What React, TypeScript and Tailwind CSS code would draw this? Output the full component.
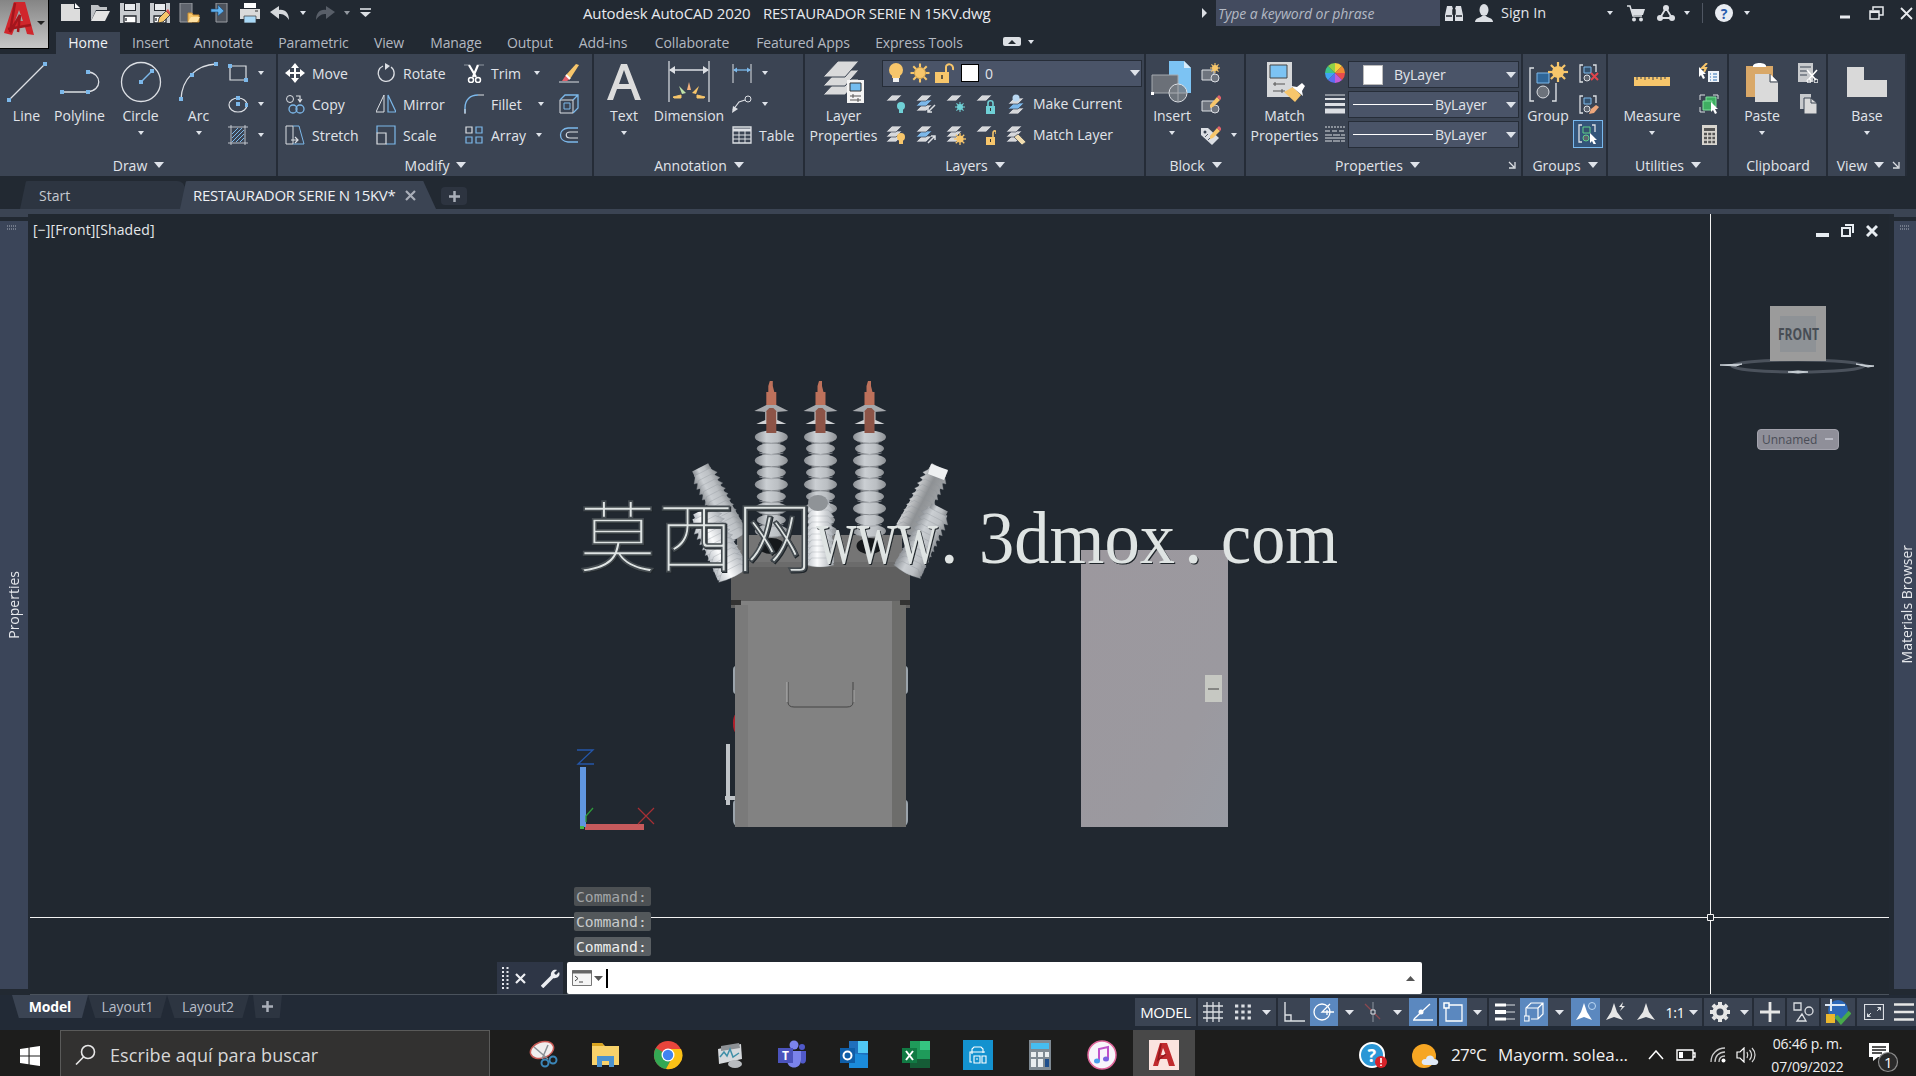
import type { ReactNode } from 'react'
import clsx from 'clsx'

type IconProps = { w?: number; h?: number; vb?: string; className?: string; children: ReactNode }

// Base wrapper, small ribbon icons are drawn on a 20x20 grid
function I({ w = 20, h = 20, vb, className, children }: IconProps) {
  return (
    <svg width={w} height={h} viewBox={vb ?? `0 0 ${w} ${h}`} fill="none" className={clsx('shrink-0', className)}>
      {children}
    </svg>
  )
}

const W = '#dcdfe4'
const B = '#7cb8ea'
const Y = '#f7c66b'

function Caret({ className, big }: { className?: string; big?: boolean }) {
  return (
    <svg width={big ? 10 : 6} height={big ? 6 : 4} viewBox="0 0 10 6" preserveAspectRatio="none" className={clsx('shrink-0', className)}>
      <path d="M0 0H10L5 6Z" fill="#dfe3ea" />
    </svg>
  )
}

function Cell({ className, children }: { className: string; children?: ReactNode }) {
  return <div className={clsx('flex h-full shrink-0 items-center justify-center', className)}>{children}</div>
}

/* ---------- title bar ---------- */

const Floppy = () => (
  <>
    <path d="M0 0H20V20H0Z" fill="#c9ccd0" />
    <path d="M4 0H16V8H4Z" fill="#23272e" />
    <path d="M5 1H15V7H5Z" fill="#e9ebee" />
    <path d="M4 13H16V20H4Z" fill="#fff" />
    <path d="M4 13H16V20H4ZM6 15v3" stroke="#23272e" strokeWidth="1.3" />
  </>
)

function TitleBar() {
  return (
    <div className="flex h-8 items-start">
      <div className="flex h-[26px] pl-[6px]">
        <Cell className="w-[30px]"><I><path d="M1 1H14V6H20V18H1Z" fill="#dcdcdc" /><path d="M15 0L20 5H15Z" fill="#fff" /></I></Cell>
        <Cell className="w-[30px]"><I><path d="M1 18V2H8L10 4H17V7H6Z" fill="#bfc2c6" /><path d="M6 8H20L15 18H1Z" fill="#e4e4e4" /></I></Cell>
        <Cell className="w-[30px]"><I><Floppy /></I></Cell>
        <Cell className="w-[30px]"><I><Floppy /><path d="M8 20L9 15L16 8L20 12L13 19Z" fill={Y} stroke="#23272e" strokeWidth=".8" /><path d="M16 8L18 6L20 9V12Z" fill="#e05252" /></I></Cell>
        <Cell className="w-[30px]"><I w={22}><path d="M1 0H13V19H1Z" fill="#5f646d" stroke="#9a9da3" /><path d="M9 19V10H13L14 12H20V19Z" fill={Y} stroke="#c98d32" /><path d="M12 14H21L18 19H9Z" fill="#ffe2a3" /></I></Cell>
        <Cell className="w-[30px]"><I><path d="M6 0H17V19H6Z" fill="#4d525b" stroke="#9a9da3" /><path d="M1 6H8V2L14 8L8 13V9H1Z" fill="#5fb0ee" stroke="#1e4d78" strokeWidth=".6" /></I></Cell>
        <Cell className="w-[30px]"><I><path d="M4 0H16V5H4Z" fill="#fff" /><path d="M0 6H20V16H0Z" fill="#dadada" /><path d="M4 13H16V20H4Z" fill="#a9d8f6" stroke="#333" strokeWidth=".7" /><path d="M15 8h3" stroke="#333" /></I></Cell>
        <Cell className="w-[30px]"><I><path d="M0 9L9 3V7C15 6 19 10 19 17C16 12 13 11 9 11V16Z" fill="#d5d8dc" /></I></Cell>
        <Cell className="w-[15px]"><Caret /></Cell>
        <Cell className="w-[30px]"><I><path d="M20 9L11 3V7C5 6 1 10 1 17C4 12 7 11 11 11V16Z" fill="#585e68" /></I></Cell>
        <Cell className="w-[14px]"><Caret className="opacity-60" /></Cell>
        <Cell className="w-[22px]"><I w={11} h={10}><path d="M0 1H11" stroke={W} strokeWidth="1.6" /><path d="M0 4H11L5.500 9Z" fill={W} /></I></Cell>
      </div>
      <div className="flex h-[26px] items-center pl-[207px] text-[15px] text-[#e8eaee]">
        <span className="w-[180px] tracking-[-0.15px]">Autodesk AutoCAD 2020</span>
        <span className="w-[430px] tracking-[-0.26px]">RESTAURADOR SERIE N 15KV.dwg</span>
      </div>
      <div className="flex h-[26px] items-center">
        <Cell className="w-[23px]"><I w={5} h={10}><path d="M0 0L5 5L0 10Z" fill={W} /></I></Cell>
        <div className="flex h-[26px] w-[224px] items-center bg-[#434b5f] pl-[2px] text-[14px] tracking-[-0.1px] text-[#b4b9c4] italic">
          Type a keyword or phrase
        </div>
        <Cell className="w-[28px]"><I w={18} h={18}><path d="M2 2H7L8 5V17H0V11ZM11 2H16L18 11V17H10V5Z" fill={W} /><path d="M8 6H10V10H8ZM1 12H7M11 12H17" stroke="#23292f" strokeWidth="1.500" /></I></Cell>
        <Cell className="w-[32px]"><I w={18} h={18}><ellipse cx="9" cy="6" rx="4.500" ry="6" fill={W} /><path d="M0 18C0 14 5 14 7 12H11C13 14 18 14 18 18Z" fill={W} /></I></Cell>
        <span className="w-[99px] pl-px text-[14.5px] text-[#e1e4e9]">Sign In</span>
        <Cell className="w-[22px]"><Caret /></Cell>
        <Cell className="w-[30px]"><I w={18} h={17}><path d="M0 1H3L6 11H15" stroke={W} strokeWidth="1.500" /><path d="M4 4H18L16 10H6Z" fill={W} /><circle cx="7" cy="14.500" r="2" fill={W} /><circle cx="14" cy="14.500" r="2" fill={W} /></I></Cell>
        <Cell className="w-[30px]"><I w={18} h={16}><path d="M9 3L3 13H15Z" stroke={W} strokeWidth="1.800" /><circle cx="9" cy="3" r="3" fill={W} /><circle cx="3" cy="13" r="3" fill={W} /><circle cx="15" cy="13" r="3" fill={W} /></I></Cell>
        <Cell className="w-[12px]"><Caret /></Cell>
        <Cell className="w-[18px]"><div className="h-[20px] w-px bg-[#4f5662]" /></Cell>
        <Cell className="w-[26px]"><div className="flex size-[18px] items-center justify-center rounded-full bg-[#e9ecf2] text-[14px] font-bold text-[#2b5cad]">?</div></Cell>
        <Cell className="w-[20px]"><Caret /></Cell>
        <Cell className="ml-[68px] w-[40px]"><I w={10} h={12}><path d="M0 10H10" stroke="#e8eaee" strokeWidth="3" /></I></Cell>
        <Cell className="w-[22px]"><I w={15} h={14}><path d="M4 4V1H14V9H10" stroke="#e8eaee" strokeWidth="1.500" /><path d="M1 5H10V13H1Z" stroke="#e8eaee" strokeWidth="1.500" /><path d="M1 6H10" stroke="#e8eaee" strokeWidth="2" /></I></Cell>
        <Cell className="w-[29px] pl-2.5"><I w={13} h={13}><path d="M1 1L12 12M12 1L1 12" stroke="#e8eaee" strokeWidth="1.800" /></I></Cell>
      </div>
    </div>
  )
}

const ribbonTabs = [
  ['Insert', 'w-[61px]'],
  ['Annotate', 'w-[85px]'],
  ['Parametric', 'w-[95px]'],
  ['View', 'w-[56px]'],
  ['Manage', 'w-[78px]'],
  ['Output', 'w-[70px]'],
  ['Add-ins', 'w-[76px]'],
  ['Collaborate', 'w-[102px]'],
  ['Featured Apps', 'w-[120px]'],
  ['Express Tools', 'w-[112px]'],
]

function Header() {
  return (
    <header className="flex h-[54px]">
      <div className="flex h-[49px] w-[49px] items-center border-r border-b border-black bg-gradient-to-b from-[#858585] to-[#c6c6c6]">
        <I w={48} h={48}>
          <path d="M14 2H25L34 35L27 34L25 27H15L12 35L4 33Z" fill="#d0262c" />
          <path d="M19 10L23 21H15Z" fill="#a3a3a3" />
          <path d="M15 3L10 32L20 15L18 32M8 29L31 25" stroke="#a3161d" strokeWidth="2.500" />
          <path d="M37 21H45L41 25Z" fill="#222" />
        </I>
      </div>
      <div className="flex flex-col">
        <TitleBar />
        <nav className="flex h-[22px] items-center pl-[7px] text-[14px] text-[#b3b8c1]">
          <span className="flex h-full w-16 items-center justify-center bg-[#3b4453] pb-0.5 text-[#f0f2f5]">Home</span>
          {ribbonTabs.map(([label, width]) => (
            <span key={label} className={clsx('pb-0.5 text-center tracking-[-0.1px]', width)}>{label}</span>
          ))}
          <I w={18} h={10} className="mb-0.5 ml-[28px]"><rect width="18" height="9" rx="2" fill={W} /><path d="M5 7L9 3L13 7Z" fill="#23292f" /></I>
          <Caret className="mb-0.5 ml-[7px]" />
        </nav>
      </div>
    </header>
  )
}

/* ---------- ribbon ---------- */

function Panel({ title, width, children, noCaret, launcher }: { title: string; width: string; children: ReactNode; noCaret?: boolean; launcher?: boolean }) {
  return (
    <section className={clsx('flex h-full shrink-0 flex-col border-r-2 border-[#252c37]', width)}>
      <div className="flex h-[101px] pt-1">{children}</div>
      <div className="flex h-5 items-center">
        <div className="flex flex-1 items-center justify-center gap-[7px] pl-px">
          {title}
          {!noCaret && <Caret big />}
        </div>
        {launcher && <I w={8} h={8} className="mr-[5px]"><path d="M1 1L6 6M7 1V7H1" stroke={W} strokeWidth="1.300" /></I>}
      </div>
    </section>
  )
}

function Big({ icon, lines, className, caret }: { icon: ReactNode; lines: string[]; className: string; caret?: boolean }) {
  return (
    <div className={clsx('flex shrink-0 flex-col items-center', className)}>
      <div className="flex h-12 items-center">{icon}</div>
      {lines.map((l) => <span key={l} className="h-5 leading-5">{l}</span>)}
      {caret && <Caret className="mt-[5px]" />}
    </div>
  )
}

function Small({ icon, label, caret, lw = '' }: { icon: ReactNode; label?: string; caret?: boolean; lw?: string }) {
  return (
    <div className="flex h-[31px] items-center pb-px">
      {icon}
      {label && <span className={clsx('pl-[7px]', lw)}>{label}</span>}
      {caret && <Caret className={label ? '' : 'ml-[10px]'} />}
    </div>
  )
}

const Dot = ({ x, y }: { x: number; y: number }) => <rect x={x - 2} y={y - 2} width="4" height="4" fill={B} />

function DrawPanel() {
  return (
    <Panel title="Draw" width="w-[278px]">
      <Big className="w-[53px]" lines={['Line']} icon={<I w={42} h={42}><path d="M3 39L39 3" stroke={W} strokeWidth="1.300" /><Dot x={3} y={39} /><Dot x={39} y={3} /></I>} />
      <Big className="w-[53px]" lines={['Polyline']} icon={<I w={42} h={42}><path d="M3 31H28C44 30 43 12 29 11" stroke={W} strokeWidth="1.300" /><Dot x={3} y={31} /><Dot x={29} y={31} /><Dot x={29} y={11} /></I>} />
      <Big className="w-[69px]" caret lines={['Circle']} icon={<I w={42} h={42}><circle cx="21" cy="21" r="19.500" stroke={W} strokeWidth="1.300" /><path d="M21 21L32 10" stroke={B} strokeWidth="1.500" /><Dot x={21} y={21} /><Dot x={32} y={10} /></I>} />
      <Big className="w-[47px]" caret lines={['Arc']} icon={<I w={42} h={42}><path d="M3 38C4 18 18 4 38 3" stroke={W} strokeWidth="1.300" /><Dot x={3} y={38} /><Dot x={14} y={14} /><Dot x={38} y={3} /></I>} />
      <div className="pl-[6px]">
        <Small caret icon={<I><path d="M2 3H18V17H2Z" stroke={W} strokeWidth="1.200" /><Dot x={2} y={3} /><Dot x={18} y={17} /></I>} />
        <Small caret icon={<I><ellipse cx="10" cy="11" rx="9" ry="7" stroke={W} strokeWidth="1.200" /><Dot x={10} y={10} /><Dot x={10} y={4} /><Dot x={19} y={11} /></I>} />
        <Small caret icon={<I><path d="M3 0V20M17 0V20M0 2H20M0 18H20" stroke={W} strokeWidth=".8" /><path d="M4 9L10 3M4 13L14 3M4 17L16 5M8 17L16 9M12 17L16 13" stroke={B} /></I>} />
      </div>
    </Panel>
  )
}

function ModifyPanel() {
  return (
    <Panel title="Modify" width="w-[316px]">
      <div className="w-[90px] pl-[7px]">
        <Small label="Move" icon={<I><path d="M10 0L14 5H11V9H15V6L20 10L15 14V11H11V15H14L10 20L6 15H9V11H5V14L0 10L5 6V9H9V5H6Z" fill="#fff" /></I>} />
        <Small label="Copy" icon={<I><circle cx="5" cy="5" r="3.500" stroke={W} /><circle cx="8" cy="15" r="4" stroke={B} strokeWidth="1.300" /><circle cx="15" cy="15" r="4" stroke={B} strokeWidth="1.300" /><path d="M11 2H15V7M13 5L15 8L17 5" stroke={W} strokeWidth="1.200" /></I>} />
        <Small label="Stretch" icon={<I><path d="M1 1H8V19H1Z" stroke={W} /><path d="M8 1H14L19 19H8" stroke={B} /><path d="M6 15H13M10 12L13 15L10 18" stroke={W} strokeWidth="1.200" /></I>} />
      </div>
      <div className="w-[90px] pl-[8px]">
        <Small label="Rotate" icon={<I><path d="M7 3A8 8 0 1 0 15 4" stroke={W} strokeWidth="1.300" /><path d="M9 0L14 3L9 7Z" fill={W} /></I>} />
        <Small label="Mirror" icon={<I><path d="M8 1V18H0Z" stroke={W} /><path d="M12 1V18H20Z" stroke={B} strokeWidth="1.200" /></I>} />
        <Small label="Scale" icon={<I><path d="M1 8V1H19V19H10" stroke={B} strokeWidth="1.200" /><path d="M1 8H10V19H1Z" stroke={W} strokeWidth="1.200" /></I>} />
      </div>
      <div className="w-[101px] pl-[6px]">
        <Small label="Trim" caret lw="w-[50px]" icon={<I><path d="M0 2H5M14 2H20" stroke="#8f96a1" /><path d="M5 2L12 14M14 2L9 14" stroke="#fff" strokeWidth="2.200" /><circle cx="7" cy="17" r="2.500" stroke="#fff" strokeWidth="1.500" /><circle cx="14" cy="17" r="2.500" stroke="#fff" strokeWidth="1.500" /></I>} />
        <Small label="Fillet" caret lw="w-[54px]" icon={<I><path d="M1 19V14C1 6 6 1 14 1" stroke={B} strokeWidth="1.400" /><path d="M14 1H20M1 15V20" stroke={W} /></I>} />
        <Small label="Array" caret lw="w-[52px]" icon={<I><path d="M2 2H8V8H2Z" stroke={W} strokeWidth="1.200" /><path d="M12 2H18V8H12ZM2 12H8V18H2ZM12 12H18V18H12Z" stroke={B} strokeWidth="1.200" /></I>} />
      </div>
      <div>
        <Small icon={<I><path d="M0 19H20" stroke={W} /><path d="M7 12L17 1L20 2L11 16Z" fill={Y} /><path d="M3 18L7 12L11 16L8 18Z" fill="#e2606a" /><path d="M7 12L11 16" stroke="#fff" strokeWidth="2" /></I>} />
        <Small icon={<I><path d="M1 6H14V19H1Z" stroke={W} /><path d="M1 6L6 1H19V14L14 19M14 6L19 1" stroke={B} strokeWidth="1.300" /><path d="M5 9H11V15H5Z" stroke={B} /></I>} />
        <Small icon={<I><path d="M19 3H9C-1 4 -1 16 9 17H19" stroke={B} strokeWidth="1.300" /><path d="M19 7H11C6 7 6 13 11 13H19" stroke={W} strokeWidth="1.200" /></I>} />
      </div>
    </Panel>
  )
}

function AnnotationPanel() {
  return (
    <Panel title="Annotation" width="w-[211px]">
      <Big className="w-[60px]" caret lines={['Text']} icon={<I w={34} h={38}><path d="M0 37L14 1H20L34 37H28L24 26H10L6 37ZM12 21H22L17 7Z" fill="#dcdcdc" /></I>} />
      <Big className="w-[70px]" lines={['Dimension']} icon={
        <I w={42} h={42}>
          <path d="M1 0V41M41 0V41" stroke={W} strokeWidth="1.200" />
          <path d="M2 9H40" stroke={W} strokeWidth="1.300" />
          <path d="M1 9L7 5V13ZM41 9L35 5V13Z" fill={W} />
          <path d="M19 29L21 21L23 29Z" fill="#f5b27e" /><path d="M11 25L18 32L14 33Z" fill="#bfe3a9" /><path d="M31 25L24 32L28 33Z" fill={Y} />
          <path d="M5 36L13 34V37H6ZM37 36L29 34V37H36Z" fill={Y} stroke={Y} />
        </I>
      } />
      <div className="pl-[8px]">
        <Small caret icon={<I><path d="M1 1V20M19 1V20" stroke={W} /><path d="M2 7H18" stroke={B} strokeWidth="1.300" /><path d="M1 7L5 4.500V9.500ZM19 7L15 4.500V9.500Z" fill={B} /></I>} />
        <Small caret icon={<I><path d="M1 16L7 8L13 6" stroke={W} strokeWidth="1.200" /><circle cx="16" cy="5" r="3" stroke={W} /><path d="M0 19L1 12L6 15Z" fill={W} /></I>} />
        <Small label="Table" icon={<I><path d="M1 2H19V18H1Z" stroke={W} strokeWidth="1.300" /><path d="M1 5H19" stroke={W} strokeWidth="3" /><path d="M1 10H19M1 14H19M7 6V18M13 6V18" stroke={W} /></I>} />
      </div>
    </Panel>
  )
}

// stacked sheets shared by most of the layer tools
const Sheets = ({ tint = '#d6d8db', n = 3 }: { tint?: string; n?: number }) => (
  <>
    {[10, 5, 0].slice(3 - n).map((y) => (
      <path key={y} d={`M0 ${y + 7}L6 ${y + 1}H16L10 ${y + 7}Z`} fill={y === 5 ? tint : '#d6d8db'} stroke="#3b4453" strokeWidth=".7" />
    ))}
  </>
)

const Bulb = ({ c }: { c: string }) => <><circle cx="15" cy="12" r="4" fill={c} /><path d="M13 15H17V19H13Z" fill={c} /></>
const Lock = ({ c, open }: { c: string; open?: boolean }) => (
  <><path d="M10 12H19V20H10Z" fill={c} /><path d={open ? 'M17 12V8C17 5 21 5 20 9' : 'M12 12V9C12 6 17 6 17 9V12'} stroke={c} strokeWidth="1.600" /><path d="M14.500 14V17" stroke="#333" /></>
)
const Burst = ({ x, y, r, c = Y }: { x: number; y: number; r: number; c?: string }) => (
  <>
    <circle cx={x} cy={y} r={r * 0.6} fill={c} />
    {[0, 45, 90, 135].map((a) => <path key={a} d={`M${x - r} ${y}H${x + r}`} stroke={c} strokeWidth={r * 0.22} transform={`rotate(${a} ${x} ${y})`} />)}
  </>
)

function LayersPanel() {
  return (
    <Panel title="Layers" width="w-[341px]">
      <Big className="w-[77px]" lines={['Layer', 'Properties']} icon={
        <I w={42} h={42}>
          {[18, 9, 0].map((y) => <path key={y} d={`M0 ${y + 16}L15 ${y}H36L22 ${y + 16}Z`} fill="#d9dadb" stroke="#3b4453" />)}
          <path d="M24 19H41V42H24Z" fill="#f4f4f4" /><path d="M27 22H38V30H27Z" fill="#74bdf0" stroke="#333" /><path d="M27 35H38M27 39H38M30 33V37M35 37V41" stroke="#555" />
        </I>
      } />
      <div>
        <div className="mt-0.5 flex h-[27px] w-[260px] items-center border border-[#262d38] bg-[#4a5468] pb-px pl-[5px]">
          <I w={16} h={20}><circle cx="8" cy="7" r="7" fill={Y} /><path d="M4 11H12V15H4Z" fill={Y} /><path d="M5 15H11V19H5Z" fill="#f1f1f1" /></I>
          <I className="ml-[6px]"><Burst x={10} y={10} r={9.5} /><circle cx="10" cy="10" r="5.500" fill={Y} stroke="#b98b37" strokeWidth=".6" /></I>
          <I className="ml-[5px]"><path d="M0 9H14V20H0Z" fill={Y} /><path d="M11 9V4C11 0 19 0 18 7" stroke={Y} strokeWidth="2" /><path d="M7 12V16" stroke="#333" strokeWidth="1.500" /></I>
          <div className="ml-[6px] size-[18px] border border-black bg-white" />
          <span className="flex-1 pl-[6px]">0</span>
          <Caret big className="mr-[1px]" />
        </div>
        <div className="mt-px flex h-[31px] items-center gap-[10px] pl-[4px]">
          <I><Sheets n={1} /><Bulb c="#6fd0d6" /></I>
          <I><Sheets tint={B} /><path d="M19 11L12 18M12 14V18H16" stroke={W} strokeWidth="1.500" /></I>
          <I><Sheets n={1} /><Burst x={14} y={13} r={5} c="#6fd0d6" /></I>
          <I><Sheets n={1} /><Lock c="#6fd0d6" /></I>
          <I><g transform="translate(2 3)"><Sheets tint={B} /></g><circle cx="10" cy="4" r="3.500" fill="#b9d8f2" /></I>
          <span className="-ml-[3px] tracking-[-0.05px]">Make Current</span>
        </div>
        <div className="flex h-[31px] items-center gap-[10px] pl-[4px]">
          <I><Sheets /><Bulb c={Y} /></I>
          <I><Sheets tint={B} /><path d="M12 18L19 11M15 11H19V15" stroke={W} strokeWidth="1.500" /></I>
          <I><Sheets /><Burst x={14} y={14} r={6} /></I>
          <I><Sheets n={1} /><Lock c={Y} open /></I>
          <I><Sheets /><path d="M8 12L12 9L20 17L16 20Z" fill="#f0ddb0" stroke="#3b4453" strokeWidth=".7" /></I>
          <span className="-ml-[3px]">Match Layer</span>
        </div>
      </div>
    </Panel>
  )
}

const BlockBase = () => <><path d="M1 7H13V17H1Z" fill="#6e747e" stroke={W} /><circle cx="14" cy="15" r="4" fill="#6e747e" stroke={W} /></>
const Pencil = () => <><path d="M9 11L16 3L19 6L12 13L9 14Z" fill={Y} /><path d="M16 3L18 1L21 4L19 6Z" fill="#e2606a" /></>

function BlockPanel() {
  return (
    <Panel title="Block" width="w-[100px]">
      <Big className="w-[52px]" caret lines={['Insert']} icon={
        <I w={42} h={42}>
          <path d="M18 0H33L40 7V32H18Z" fill="#7cc3f3" /><path d="M33 0V7H40Z" fill="#d7ecfa" />
          <path d="M1 14H27V32H1Z" fill="#6b7078" stroke="#a5a9af" /><circle cx="27" cy="32" r="9" fill="#777c84" fillOpacity=".85" stroke={W} /><path d="M18 32H36M27 23V41" stroke="#a5a9af" /><path d="M0 31h3v3H0z" fill="#fff" />
        </I>
      } />
      <div className="pl-[3px]">
        <Small icon={<I><BlockBase /><Burst x={14} y={5} r={5} /></I>} />
        <Small icon={<I><BlockBase /><Pencil /></I>} />
        <Small caret icon={<I><path d="M0 3H7L18 13L11 20L0 10Z" fill={W} /><circle cx="4" cy="7" r="1.500" fill="#3b4453" /><path d="M4 12L7 9M7 15L10 12" stroke="#555c68" /><Pencil /></I>} />
      </div>
    </Panel>
  )
}

function PropCombo({ swatch }: { swatch?: boolean }) {
  return (
    <div className="mb-[3px] flex h-[27px] w-[171px] items-center border border-[#262d38] bg-[#4a5468]">
      {swatch ? <div className="ml-[14px] size-5 border border-[#bbb] bg-white" /> : <div className="ml-1 h-px w-[80px] bg-white" />}
      <span className={clsx('flex-1', swatch ? 'pl-[11px]' : 'pl-[2px]')}>ByLayer</span>
      <Caret big className="mr-[2px]" />
    </div>
  )
}

const wheel = [['#f4d13d', 0], ['#f08b32', 45], ['#e84c4c', 90], ['#c25bd8', 135], ['#5b6df0', 180], ['#3fa4f2', 225], ['#3cc48a', 270], ['#8fd246', 315]] as const

function PropertiesPanel() {
  return (
    <Panel title="Properties" width="w-[277px]" launcher>
      <Big className="w-[77px]" lines={['Match', 'Properties']} icon={
        <I w={42} h={42}>
          <path d="M3 1H28V36H3Z" fill="#d6d8da" /><path d="M6 4H23V17H6Z" fill="#7cc3f3" stroke="#444" /><path d="M9 23H21M9 30H21M11 21V25M18 28V32" stroke="#555" />
          <path d="M20 31L29 26L37 34L31 41Z" fill={Y} /><path d="M27 25L33 26L38 22L41 25L38 30L39 35Z" fill="#fff" />
        </I>
      } />
      <div className="w-[25px] pl-[2px]">
        <Small icon={<I>{wheel.map(([c, a]) => <path key={a} d="M10 10V0A10 10 0 0 1 17.070 2.930Z" fill={c} transform={`rotate(${a} 10 10)`} />)}</I>} />
        <Small icon={<I><path d="M0 1H20" stroke={W} /><path d="M0 5H20" stroke={W} strokeWidth="2" /><path d="M0 10.500H20" stroke={W} strokeWidth="3" /><path d="M0 17H20" stroke={W} strokeWidth="5" /></I>} />
        <Small icon={<I><path d="M0 2H20" stroke={W} strokeDasharray="2 1" /><path d="M0 6H20" stroke={W} strokeDasharray="5 2" /><path d="M0 10H20M0 16H20" stroke={W} strokeDasharray="7 1" /><path d="M0 13H20" stroke={W} /></I>} />
      </div>
      <div className="pt-[3px]">
        <PropCombo swatch />
        <PropCombo />
        <PropCombo />
      </div>
    </Panel>
  )
}

const MiniGroup = ({ c = B }: { c?: string }) => (
  <><path d="M4 1H1V18H4M14 1H17V8" stroke={W} strokeWidth="1.300" /><path d="M5 3H12V9H5Z" fill="#35526e" stroke={c} /><circle cx="8" cy="14" r="3" fill="#5d636d" stroke={c === B ? W : c} /></>
)
const Cursor = ({ x, y }: { x: number; y: number }) => <path transform={`translate(${x} ${y})`} d="M0 0L7 7H4L6 11L4 12L2 8L0 10Z" fill="#fff" />

function GroupsPanel() {
  return (
    <Panel title="Groups" width="w-[85px]">
      <Big className="w-[50px]" lines={['Group']} icon={
        <I w={40} h={42}>
          <path d="M6 7H2V40H6M24 40H28V22" stroke={W} strokeWidth="1.400" /><path d="M9 12H21V22H9Z" fill="#2f6698" stroke={B} /><circle cx="15" cy="31" r="6" fill="#6c727b" stroke={W} />
          <Burst x={30} y={11} r={10} />
        </I>
      } />
      <div className="w-[31px]">
        <div className="flex h-[31px] items-center justify-center"><I><MiniGroup /><path d="M12 9L19 16M19 9L12 16" stroke="#e2454c" strokeWidth="2" /></I></div>
        <div className="flex h-[31px] items-center justify-center"><I><MiniGroup /><path d="M10 19L12 14L17 10L20 12L15 18Z" fill="#eda77c" /></I></div>
        <div className="flex h-[28px] w-[30px] items-center justify-center border border-[#79b9ee] bg-[#34557a]"><I><MiniGroup c="#5fd08a" /><Cursor x={12} y={9} /></I></div>
      </div>
    </Panel>
  )
}

function OtherPanels() {
  return (
    <>
      <Panel title="Utilities" width="w-[121px]">
        <Big className="w-[88px]" caret lines={['Measure']} icon={<I w={36} h={10} className="-mt-0.5"><path d="M0 1H36V10H0Z" fill={Y} /><path d="M3 0V4M7 0V3M11 0V4M15 0V3M19 0V4M23 0V3M27 0V4M31 0V3" stroke="#3b4453" /></I>} />
        <div className="pl-[3px]">
          <Small icon={<I><path d="M8 0L3 5H7L5 9" stroke={Y} strokeWidth="2" /><path d="M9 8H20V19H9Z" fill="#eef3f8" /><path d="M11 11H12M14 11H18M11 14H12M14 14H18M11 17H12M14 17H18" stroke="#2b6fb3" /><Cursor x={0} y={4} /></I>} />
          <Small icon={<I><path d="M1 6V1H6M14 1H19V5M1 13V18H6" stroke={W} /><path d="M7 3H17V13H7Z" fill="#3fae62" stroke="#7ee09c" /><path d="M4 7H13V16H4Z" fill="#3fae62" stroke="#7ee09c" /><Cursor x={12} y={8} /></I>} />
          <Small icon={<I><path d="M3 0H18V20H3Z" fill="#d8d5cf" /><path d="M5 3H16V6H5Z" fill="#555" /><path d="M5 9H16M5 13H16M5 17H16" stroke="#555" strokeWidth="2.500" strokeDasharray="3 1.200" /></I>} />
        </div>
      </Panel>
      <Panel title="Clipboard" width="w-[99px]" noCaret>
        <Big className="w-[66px]" caret lines={['Paste']} icon={<I w={34} h={42}><path d="M1 5H28V36H1Z" fill="#d9a868" /><path d="M8 5C8 1 21 1 21 5V6H8Z" fill="#fff" /><path d="M10 13H25L33 21V41H10Z" fill="#dadada" /><path d="M25 13V21H33" stroke="#3b4453" /><path d="M26 14L32 20H26Z" fill="#fff" /></I>} />
        <div className="pl-[3px]">
          <Small icon={<I><path d="M0 0H15V19H0Z" fill="#c8cacd" /><path d="M2 4H13M2 8H10M2 12H9" stroke="#3b4453" /><path d="M9 7L18 17M19 7L11 16" stroke="#fff" strokeWidth="1.600" /><circle cx="11" cy="18" r="2" stroke="#fff" /><circle cx="18" cy="18" r="2" stroke="#fff" /></I>} />
          <Small icon={<I><path d="M2 0H13V15H2Z" fill="#c8cacd" /><path d="M6 4H13L19 9V20H6Z" fill="#dadada" stroke="#3b4453" /><path d="M13 4V9H19" stroke="#3b4453" /></I>} />
        </div>
      </Panel>
      <Panel title="View" width="w-[79px]" launcher>
        <Big className="w-[78px]" caret lines={['Base']} icon={<I w={40} h={30}><path d="M0 0H17V13H40V30H0Z" fill="#d9d9d9" /></I>} />
      </Panel>
    </>
  )
}

/* ---------- drawing area ---------- */

const sheds = [437, 448.500, 460.500, 472.500, 484.500, 496.500, 508.500, 520, 531]

function Bushing({ x }: { x: number }) {
  return (
    <g>
      <ellipse cx={x} cy={546} rx="13" ry="8" fill="#15181b" />
      <path d={`M${x - 1.5} 381H${x + 1.5}V386L${x + 3} 392H${x + 5}V406H${x - 5}V392H${x - 3}V386Z`} fill="#bd715b" />
      <path d={`M${x - 17} 411L${x - 5} 405H${x + 5}L${x + 17} 411L${x + 5} 412H${x - 5}Z`} fill="#a6a9ad" />
      <path d={`M${x - 6} 412H${x + 6}V420L${x + 15} 424H${x - 15}L${x - 6} 420Z`} fill="#d0d2d4" />
      <path d={`M${x - 9} 437H${x + 9}V535H${x - 9}Z`} fill="#6f7378" />
      {sheds.map((y, i) => <ellipse key={y} cx={x} cy={y} rx={i % 2 ? 14.5 : 16.5} ry={i % 2 ? 5.4 : 6.4} fill="url(#shed)" />)}
      {sheds.map((y, i) => <path key={y} d={`M${x - 12} ${y + 4.5}Q${x} ${y + 8} ${x + 12} ${y + 4.5}`} stroke={i % 2 ? '#9a9ea3' : '#7d8186'} strokeWidth=".8" fill="none" />)}
      <path d={`M${x - 5} 411L${x - 2} 408H${x + 2}L${x + 5} 411V433H${x - 5}Z`} fill="#8d5447" />
    </g>
  )
}

function SideBushing({ x, y, n, r, rot, fill }: { x: number; y: number; n: number; r: number; rot: number; fill: string }) {
  return (
    <g transform={`translate(${x} ${y}) rotate(${rot})`}>
      <path d={`M${-r * 0.7} 0H${r * 0.7}L${r} ${n * 6}Q0 ${n * 6 + 8} ${-r} ${n * 6}Z`} fill={fill} />
      <path d="M-9 -4H9V6H-9Z" fill={fill} />
      {Array.from({ length: n }, (_, i) => (
        <path key={i} d={`M${-r} ${i * 6 + 8}L${-r * 0.6} ${i * 6 + 1}H${r * 0.6}L${r} ${i * 6 + 8}Q0 ${i * 6 + 12} ${-r} ${i * 6 + 8}Z`} fill={fill} stroke="#8d9297" strokeWidth=".3" />
      ))}
    </g>
  )
}

function Watermark() {
  return (
    <g fill="#dfe4e3" className="font-['Liberation_Serif','Noto_Sans_CJK_SC',serif] text-[74px] drop-shadow-[1.5px_1.5px_0_#20262b]">
      <text x="579" y="566" textLength="234" stroke="#444b50" strokeWidth="1.6" className="font-['Noto_Sans_CJK_SC',sans-serif] text-[77px] font-light">莫西网</text>
      <text x="816" y="563" textLength="122" lengthAdjust="spacingAndGlyphs" className="text-[80px]">www</text>
      <text x="940" y="563">.</text>
      <text x="979" y="563" textLength="196" lengthAdjust="spacingAndGlyphs">3dmox</text>
      <text x="1184" y="563">.</text>
      <text x="1221" y="563" textLength="117" lengthAdjust="spacingAndGlyphs">com</text>
    </g>
  )
}

function Model() {
  return (
    <svg width="1859" height="781" viewBox="30 214 1859 781" fill="none" className="absolute inset-0">
      <defs>
        <linearGradient id="shed"><stop stopColor="#8b8f94" /><stop offset=".35" stopColor="#cbcfd3" /><stop offset=".7" stopColor="#bbbfc3" /><stop offset="1" stopColor="#8b8f93" /></linearGradient>
        <linearGradient id="white"><stop stopColor="#b9bec4" /><stop offset=".4" stopColor="#fbfcfd" /><stop offset="1" stopColor="#a5aab0" /></linearGradient>
        <linearGradient id="dim"><stop stopColor="#d3d5d7" /><stop offset=".5" stopColor="#8e9194" /><stop offset="1" stopColor="#a0a3a6" /></linearGradient>
        <linearGradient id="door" x2="1" y2="1"><stop stopColor="#9c989e" /><stop offset=".7" stopColor="#9b999f" /><stop offset="1" stopColor="#999ca4" /></linearGradient>
      </defs>

      {/* tank and lid */}
      <path d="M737 535H902V566H737Z" fill="#757575" />
      <path d="M733 562H908V568H733Z" fill="#6b6b6b" />
      <Bushing x={771.3} />
      <Bushing x={820.5} />
      <Bushing x={869.5} />
      <path d="M731 567H910V608H731Z" fill="#5f5f5f" />
      <path d="M731 600H741V605H731ZM900 600H910V605H900Z" fill="#333" />
      <path d="M736 666Q733 666 733 670V690Q733 694 736 694ZM905 666Q908 666 908 670V690Q908 694 905 694ZM736 800Q733 800 733 804V820Q733 824 736 826ZM905 800Q908 800 908 804V820Q908 824 905 826Z" fill="#9ba4ac" />
      <path d="M736 714Q733 716 733 723Q733 731 736 733Z" fill="#b3202c" />
      <path d="M735 605H741V601H900V605H906V827H735Z" fill="#828282" />
      <path d="M735 605H748V827H735Z" fill="#7a7a7a" />
      <path d="M892 601H900V605H906V827H892Z" fill="#6d6d6b" />
      <path d="M726 744H730V805H726Z" fill="#c0c4c8" /><path d="M725 798H735" stroke="#c0c4c8" strokeWidth="4" />
      <path d="M788 682V702Q788 707 794 707H847Q853 707 853 702V682" stroke="#454545" />
      <path d="M787 682V702" stroke="#b5b5b5" /><path d="M854 690V702" stroke="#a5a5a5" />
      <SideBushing x={702} y={471} n={12} r={13} rot={-27} fill="url(#shed)" />
      <SideBushing x={938} y={471} n={11} r={13} rot={27} fill="url(#dim)" />
      <SideBushing x={703} y={514} n={11} r={17} rot={-27} fill="url(#white)" />
      <SideBushing x={938} y={511} n={11} r={15} rot={27} fill="url(#shed)" />
      <SideBushing x={820} y={503} n={10} r={14} rot={0} fill="url(#white)" />
      <ellipse cx="818" cy="503" rx="10" ry="8" fill="#8f9397" />
      <path d="M931 464L948 470L944 480L928 474Z" fill="#eef0f1" />

      {/* control cabinet */}
      <path d="M1081 550H1228V827H1081Z" fill="url(#door)" />
      <path d="M1205 675H1222V702H1205Z" fill="#c6c8c2" /><path d="M1208 689H1219" stroke="#444" />

      {/* ucs icon */}
      <path d="M585 827H644" stroke="#c65a5c" strokeWidth="6" /><path d="M583 767V827" stroke="#6096e0" strokeWidth="6" />
      <path d="M577 750H593L578 764H594" stroke="#2456a8" strokeWidth="1.300" />
      <path d="M638 808L654 824M654 808L638 824" stroke="#a62f34" strokeWidth="1.200" />
      <path d="M593 808L586 816V822" stroke="#2f9a3a" strokeWidth="1.300" /><path d="M580 826h4v3h-4z" fill="#48b54a" />

      <Watermark />

      {/* view cube */}
      <ellipse cx="1798" cy="366" rx="66" ry="6" stroke="#4b525c" strokeWidth="3" />
      <path d="M1720 365L1742 364L1736 366ZM1856 364L1874 366L1868 367ZM1788 372L1798 371L1808 372L1798 373Z" fill="#c9d0d6" stroke="#c9d0d6" />
      <path d="M1770 306H1826V361H1770Z" fill="#9b9b9b" /><path d="M1780 316H1816V352H1780Z" fill="#8e9296" />
      <text x="1778" y="340" textLength="41" lengthAdjust="spacingAndGlyphs" fill="#474d54" className="font-['Open_Sans',sans-serif] text-[16px] font-bold">FRONT</text>

      {/* crosshair */}
      <path d="M1710.500 214V915M1710.500 921V995M30 917.500H1707M1714 917.500H1889" stroke="#f2f2f2" />
      <path d="M1707.500 914.500H1713.500V920.500H1707.500Z" stroke="#f2f2f2" />
    </svg>
  )
}

function Palette({ label, right }: { label: string; right?: boolean }) {
  return (
    <aside className={clsx('flex h-[781px] shrink-0 flex-col', right ? 'w-[27px] pl-[5px]' : 'w-[30px] pr-[2px]')}>
      <div className="h-[3px] bg-[#3b4453]" />
      <div className="mt-1 flex h-[768px] flex-col items-center bg-[#3b4559] pt-1">
        <I w={10} h={6} className={right ? '' : '-ml-1'}><path d="M0 1H10M0 4H10" stroke="#aab0bc" strokeDasharray="1 1" /></I>
        <div className={clsx('flex w-full flex-1 items-center justify-center pb-[11px] text-[14px] text-[#e6e8ec]', right ? 'pl-[3px]' : 'pr-px')}>
          <span className="rotate-180 [writing-mode:vertical-rl]">{label}</span>
        </div>
      </div>
    </aside>
  )
}

function CommandLine() {
  return (
    <div className="absolute top-[673px] left-[467px] w-[925px]">
      <div className="flex flex-col items-start gap-[6px] pl-[77px] font-['DejaVu_Sans_Mono',monospace] text-[14.7px] leading-[20px]">
        <span className="h-[19px] w-[77px] rounded-xs bg-[#4c5053] pl-0.5 text-[#a3a6a8]">Command:</span>
        <span className="h-[19px] w-[77px] rounded-xs bg-[#53585b] pl-0.5 text-[#c9cbcc]">Command:</span>
        <span className="h-[19px] w-[77px] rounded-xs bg-[#595e62] pl-0.5 text-[#eeeeee]">Command:</span>
      </div>
      <div className="mt-[6px] flex h-8">
        <div className="mr-1 flex w-[66px] items-center bg-[#2e3646] pl-[5px]">
          <I w={7} h={22}><path d="M1 0V22M5.500 0V22" stroke="#e4e7ee" strokeWidth="2" strokeDasharray="2 2" /></I>
          <I w={11} h={11} className="ml-[6px]"><path d="M1 1L10 10M10 1L1 10" stroke="#eceef2" strokeWidth="2.200" /></I>
          <I w={19} h={19} className="ml-[15px]"><path d="M1 18L12 7" stroke="#eceef2" strokeWidth="3.500" /><path d="M10 8C9 3 12 0 16 1L13 4L15 6L18 3C20 7 16 10 12 9Z" fill="#eceef2" /></I>
        </div>
        <div className="flex flex-1 items-center rounded-xs bg-white pl-[5px]">
          <I><path d="M.5 2.500H19.500V17.500H.5Z" fill="#f5f5f5" stroke="#777" /><path d="M0 4H20" stroke="#666" strokeWidth="3" /><path d="M3 8L6 10.500L3 13M7 14H11" stroke="#444" /></I>
          <I w={9} h={5} className="ml-[2px]"><path d="M0 0H9L4.500 5Z" fill="#555" /></I>
          <div className="ml-[3px] h-[19px] w-0.5 bg-black" />
          <I w={9} h={5} className="mr-[7px] ml-auto"><path d="M0 5H9L4.500 0Z" fill="#555" /></I>
        </div>
      </div>
    </div>
  )
}

function Workspace() {
  return (
    <div className="flex h-[781px]">
      <Palette label="Properties" />
      <main className="relative w-[1859px] shrink-0 overflow-hidden border-b border-[#4a525c] bg-[#212830]">
        <Model />
        <span className="absolute top-[5px] left-[3px] text-[14px] text-[#e6e8ea] tracking-[0.12px]">[−][Front][Shaded]</span>
        <div className="absolute top-[10px] right-[11px] flex items-end gap-[12px]">
          <I w={13} h={13}><path d="M0 11H13" stroke="#e8edf2" strokeWidth="4" /></I>
          <I w={13} h={13}><path d="M1 4H9V12H1Z" stroke="#e8edf2" strokeWidth="2" /><path d="M4 1H12V9" stroke="#e8edf2" strokeWidth="2" /></I>
          <I w={12} h={13}><path d="M1 2L11 12M11 2L1 12" stroke="#e8edf2" strokeWidth="3" /></I>
        </div>
        <div className="absolute top-[215px] left-[1727px] flex h-[21px] w-[82px] items-center rounded-[4px] border border-[#a3a3ad] bg-[#8f8f99] pl-1 text-[12px] text-[#4a4d57]">
          Unnamed
          <I w={8} h={3} className="ml-2"><path d="M0 1H8" stroke="#b9bac4" strokeWidth="2" /></I>
        </div>
        <CommandLine />
      </main>
      <Palette label="Materials Browser" right />
    </div>
  )
}

/* ---------- file tabs, layout tabs, status bar ---------- */

function FileTabs() {
  return (
    <div className="flex h-[33px] items-end pt-[5px] pl-[20px]">
      <div className="flex h-7 w-[165px] items-center rounded-t-lg bg-[#2d3541] pl-[19px] text-[#c5c9d0] [clip-path:polygon(6px_0,100%_0,100%_100%,0_100%)]">Start</div>
      <div className="-ml-[5px] flex h-7 w-[256px] items-center rounded-t-lg bg-[#3b4453] pl-[13px] text-[#eef0f3] [clip-path:polygon(6px_0,95%_0,100%_100%,0_100%)]">
        <span className="w-[212px] text-[15px] tracking-[-0.3px]">RESTAURADOR SERIE N 15KV*</span>
        <I w={11} h={11}><path d="M1 1L10 10M10 1L1 10" stroke="#a9aeb8" strokeWidth="2.200" /></I>
      </div>
      <div className="mb-1 ml-[5px] flex h-[18px] w-[26px] items-center justify-center rounded bg-[#2d3440]">
        <I w={11} h={11}><path d="M5.500 0V11M0 5.500H11" stroke="#a9aeb8" strokeWidth="2.500" /></I>
      </div>
    </div>
  )
}

function LayoutTabs() {
  const shape = 'flex h-[23px] items-center justify-center [clip-path:polygon(0_0,100%_0,92%_100%,9%_100%)]'
  return (
    <div className="flex pl-[12px] text-[14px] text-[#b9bec8]">
      <span className={clsx(shape, 'w-[76px] bg-[#3b4453] font-bold tracking-[-0.2px] text-white')}>Model</span>
      <span className={clsx(shape, 'w-[79px] bg-[#2d3541]')}>Layout1</span>
      <span className={clsx(shape, 'w-[82px] bg-[#2d3541]')}>Layout2</span>
      <span className={clsx(shape, 'ml-[4px] w-[29px] bg-[#2d3541]')}><I w={11} h={11}><path d="M5.500 0V11M0 5.500H11" stroke="#a9aeb8" strokeWidth="2.500" /></I></span>
    </div>
  )
}

function S({ w, on, sep, children }: { w: string; on?: boolean; sep?: boolean; children: ReactNode }) {
  return <div className={clsx('flex h-[28px] shrink-0 items-center justify-center', w, on ? 'bg-[#5b88bf]' : 'bg-[#3b4453]', sep && 'border-l-2 border-[#252c37]')}>{children}</div>
}

const C9 = () => <svg width="9" height="5" viewBox="0 0 9 5"><path d="M0 0H9L4.500 5Z" fill="#e3e6ec" /></svg>

function StatusBar() {
  return (
    <div className="ml-auto flex pt-[3px]">
      <S w="w-[61px]"><span className="text-[15px] tracking-[-0.3px] text-white">MODEL</span></S>
      <S w="w-[32px]" sep><I><path d="M4 0V20M10 0V20M16 0V20M0 4H20M0 10H20M0 16H20" stroke={W} strokeWidth="1.300" /></I></S>
      <S w="w-[29px]"><I w={16} h={16}><path d="M0 2H16M0 8H16M0 14H16" stroke={W} strokeWidth="3" strokeDasharray="3.300 3" /></I></S>
      <S w="w-[19px]"><C9 /></S>
      <S w="w-[34px]" sep><I w={21} h={20}><path d="M1 0V19H21M1 13H7V19" stroke={W} strokeWidth="1.400" /></I></S>
      <S w="w-[28px]" on><I w={22}><circle cx="9" cy="10" r="8" stroke="#fff" strokeWidth="1.300" /><path d="M17 2L9 10H21M14 8V13" stroke="#fff" strokeWidth="1.300" /></I></S>
      <S w="w-[22px]"><C9 /></S>
      <S w="w-[26px]"><I><path d="M10 0V20" stroke="#8d949f" /><path d="M2 2L17 17" stroke="#8a4850" strokeWidth="1.300" /><path d="M8 8H12V12H8Z" fill="#3b4453" stroke={W} /></I></S>
      <S w="w-[23px]"><C9 /></S>
      <S w="w-[28px]" on><I><path d="M0 18H20M1 17L17 2" stroke="#fff" strokeWidth="1.300" /><circle cx="8" cy="10" r="2.500" fill="#fff" /></I></S>
      <div className="w-0.5" />
      <S w="w-[28px]" on><I><path d="M3 6V19H19V3H6" stroke="#fff" strokeWidth="1.300" /><path d="M1 1H6V6H1Z" stroke="#fff" strokeWidth="1.500" /></I></S>
      <S w="w-[20px]"><C9 /></S>
      <S w="w-[33px]" sep><I><path d="M0 3H11M0 17H11" stroke="#fff" strokeWidth="3" /><path d="M0 10H11" stroke="#fff" strokeWidth="4" /><path d="M11 3H20M11 10H20M11 17H20" stroke={W} /></I></S>
      <S w="w-[28px]" on><I><path d="M2 14V6L7 1H19V12L14 17H7M3 6H14V17M14 6L19 1" stroke="#fff" strokeWidth="1.200" /><path d="M0 14H5V19H0Z" stroke="#fff" strokeWidth="1.200" /></I></S>
      <S w="w-[23px]"><C9 /></S>
      <S w="w-[29px]" on><I><path d="M8 1L11 10L16 18L8 15L0 18L5 10Z" fill="#fff" /><circle cx="16" cy="4" r="3.500" stroke="#bcd7f2" /></I></S>
      <S w="w-[31px]"><I><path d="M8 1L11 10L17 18L8 15L0 18L5 10Z" fill="#e6e6e6" /><path d="M17 0L13 5H16L14 9L19 4H16Z" fill="#e6e6e6" /></I></S>
      <S w="w-[29px]"><I><path d="M10 1L13 10L19 18L10 15L1 18L7 10Z" fill="#e6e6e6" /></I></S>
      <S w="w-[24px] pl-1.5"><span className="tracking-[-0.3px] text-white">1:1</span></S>
      <S w="w-[18px]"><C9 /></S>
      <S w="w-[34px]" sep>
        <I>
          <circle cx="10" cy="10" r="5.500" stroke="#e6e6e6" strokeWidth="4" />
          {[0, 45, 90, 135].map((a) => <path key={a} d="M10 0V3M10 17V20" stroke="#e6e6e6" strokeWidth="4" transform={`rotate(${a} 10 10)`} />)}
        </I>
      </S>
      <S w="w-[16px]"><C9 /></S>
      <S w="w-[33px]" sep><I><path d="M10 0V20M0 10H20" stroke="#e6e6e6" strokeWidth="2.800" /></I></S>
      <S w="w-[34px]" sep><I w={21}><path d="M1 1H8V8H1Z" stroke={W} strokeWidth="1.300" /><circle cx="16" cy="9" r="4" stroke={W} strokeWidth="1.300" /><path d="M9 12L4 19H13Z" stroke={W} strokeWidth="1.300" /></I></S>
      <S w="w-[36px]" sep>
        <I w={26} h={26}><circle cx="13" cy="11" r="10" fill="#2c68b8" /><path d="M1 15H10V24H1Z" fill="#eab72e" /><path d="M0 6H20M6 0V12" stroke="#dce8f5" strokeWidth="2" /><path d="M11 17L16 23L25 13" stroke="#47a94b" strokeWidth="4" /></I>
      </S>
      <S w="w-[36px]" sep><I w={20} h={16}><path d="M.500 .500H19.500V15.500H.500Z" stroke={W} strokeWidth="1.200" /><path d="M3 9V13H7ZM17 7V3H13Z" fill={W} /><path d="M3 13L7 9M17 3L13 7" stroke={W} /></I></S>
      <S w="w-[25px]"><I w={20} h={18}><path d="M0 1.500H20M0 9H20M0 16.500H20" stroke="#e6e6e6" strokeWidth="2.600" /></I></S>
    </div>
  )
}

/* ---------- windows taskbar ---------- */

const taskIcons = [
  <><ellipse cx="13" cy="10" rx="12" ry="8" transform="rotate(-20 13 10)" fill="#f1eeee" stroke="#c85a55" strokeWidth="1.500" /><path d="M5 7L19 19M19 5L13 19" stroke="#8a8f94" strokeWidth="1.500" /><circle cx="16" cy="23" r="3.500" stroke="#3b86b8" strokeWidth="2" /><circle cx="24" cy="20" r="3.500" stroke="#3b86b8" strokeWidth="2" /></>,
  <><path d="M1 3H11L14 6H28V25H1Z" fill="#f8d26a" /><path d="M1 3H11L13 6H1Z" fill="#d9a520" /><path d="M6 27V16H23V27H18V21H11V27Z" fill="#4b92cf" /></>,
  <><circle cx="15" cy="15" r="14" fill="#e8453c" /><path d="M15 15L2.900 8A14 14 0 0 0 13 29L19 18Z" fill="#34a853" /><path d="M15 15L19 18L13 29A14 14 0 0 0 28 9H15Z" fill="#fbc116" /><circle cx="15" cy="15" r="6.500" fill="#fff" /><circle cx="15" cy="15" r="5.200" fill="#3f83f0" /></>,
  <><path d="M3 9L26 4L27 19L4 24Z" fill="#d6d9dc" /><path d="M6 6L24 3L25 8L6 11Z" fill="#8d9195" /><path d="M5 17L9 12L12 16L15 9L18 17L24 13" stroke="#3f8fa8" strokeWidth="1.500" /><ellipse cx="20" cy="24" rx="7" ry="4" fill="#b9bcbf" /></>,
  <><circle cx="17" cy="5" r="4.500" fill="#7b83eb" /><circle cx="25" cy="7" r="3" fill="#5059c9" /><path d="M10 11H24V20C24 30 10 30 10 20Z" fill="#7b83eb" /><path d="M24 11H29V19C29 24 26 24 24 23Z" fill="#5059c9" /><path d="M1 8H16V23H1Z" fill="#4b53bc" /><text x="5" y="20" fill="#fff" className="text-[12px] font-bold">T</text></>,
  <><path d="M10 1H29V27H10Z" fill="#1f6fbd" /><path d="M19 1H29V13H19Z" fill="#50c8f5" /><path d="M10 13L29 15V28H10Z" fill="#1b8bdb" /><path d="M1 8H16V23H1Z" fill="#0f5ea8" /><circle cx="8.500" cy="15.500" r="4" stroke="#fff" strokeWidth="2" /></>,
  <><path d="M9 1H29V28H9Z" fill="#1f9b5a" /><path d="M19 1H29V10H19Z" fill="#35c481" /><path d="M9 19H29V28H9Z" fill="#155c36" /><path d="M1 8H16V23H1Z" fill="#117a43" /><path d="M5 11L12 20M12 11L5 20" stroke="#fff" strokeWidth="2" /></>,
  <><path d="M0 0H30V30H0Z" fill="#1492cf" /><path d="M9 14V9L11 7H18L20 9V13M7 14V12H22M7 14V22H9M11 16H17V23H11ZM19 16H23V23H19ZM13 19H15" stroke="#fff" strokeWidth="1.100" /></>,
  <><path d="M4 0H26V30H4Z" fill="#7f8a93" /><path d="M6 3H24V9H6Z" fill="#47bdf0" /><path d="M6 12H11V17H6ZM13 12H18V17H13ZM6 19H11V27H6ZM13 19H18V27H13ZM20 12H24V17H20Z" fill="#e9edf0" /><path d="M20 19H24V27H20Z" fill="#1e4e8c" /></>,
  <><circle cx="15" cy="15" r="14" fill="#f8f4fb" stroke="#e0679b" strokeWidth="1.500" /><path d="M12 21V9L21 7V19" stroke="#c052c9" strokeWidth="2" /><ellipse cx="10" cy="21" rx="3" ry="2.500" fill="#4aa0ee" /><ellipse cx="19" cy="19" rx="3" ry="2.500" fill="#7c62e0" /></>,
  <><path d="M0 0H30V30H0Z" fill="#fbe3df" /><path d="M11 3H18L26 26H20L18 19H11L9 26H4Z" fill="#c02a2e" /><path d="M14 8L17 15H12Z" fill="#fbe3df" /><path d="M12 4L9 20L17 14" stroke="#8f171c" strokeWidth="1.500" /></>,
]

function Taskbar() {
  return (
    <footer className="flex h-[46px] items-center bg-[#1d1d1c] pt-px text-[#f0f0f0]">
      <Cell className="w-[60px] pt-1"><I><path d="M0 3L8.500 1.800V9.400H0ZM9.600 1.600L20 0V9.400H9.600ZM0 10.500H8.500V18.200L0 17ZM9.600 10.500H20V20L9.600 18.400Z" fill="#fff" /></I></Cell>
      <div className="-mt-px flex h-[46px] w-[430px] items-center border border-b-0 border-[#5a5a59] bg-[#323130] pt-1 pl-[14px]">
        <I w={21} h={21} className="-mt-0.5"><circle cx="13" cy="8" r="6.500" stroke="#e8e8e8" strokeWidth="1.600" /><path d="M8.500 13L1 20.500" stroke="#e8e8e8" strokeWidth="1.600" /></I>
        <span className="pl-[14px] text-[18px] tracking-[0.1px] text-[#d8d8d8]">Escribe aquí para buscar</span>
      </div>
      <div className="-mt-px flex h-[46px] pl-[23px]">
        {taskIcons.map((icon, i) => (
          <div key={i} className={clsx('flex h-full w-[62px] items-center justify-center pt-1', i === 10 && 'bg-[#484848]')}>
            <I w={30} h={30}>{icon}</I>
          </div>
        ))}
      </div>
      <Cell className="ml-[154px] w-[44px] pt-1">
        <I w={28} h={28} className="-mr-1"><circle cx="13" cy="13" r="12" fill="#2b97d6" stroke="#fff" strokeWidth="2" /><text x="8.500" y="20" fill="#fff" className="text-[18px] font-bold">?</text><circle cx="22" cy="20" r="6" fill="#d8232a" /><path d="M22 16V21M22 22.500V24" stroke="#fff" strokeWidth="1.600" /></I>
      </Cell>
      <Cell className="ml-[13px] w-[38px] pt-1"><I w={28} h={26}><circle cx="13" cy="13" r="12" fill="#f6a623" /><path d="M14 22C9 22 10 15 15 16C16 11 23 12 23 16C29 16 28 22 24 22Z" fill="#dfe9f6" /></I></Cell>
      <span className="ml-[5px] w-[48px] pt-[3px] pl-0.5 text-[17px] tracking-[-0.6px]">27°C</span>
      <span className="w-[146px] pt-[3px] pl-px text-[17px]">Mayorm. solea...</span>
      <Cell className="w-[26px] pt-[3px]"><I w={16} h={10}><path d="M1 9L8 1L15 9" stroke="#fff" strokeWidth="1.500" /></I></Cell>
      <Cell className="w-[34px] pt-[3px]"><I w={20} h={12}><path d="M1 1H17V11H1ZM17 4H19V8H17" stroke="#fff" strokeWidth="1.400" /><path d="M3 3H7V9H3Z" fill="#fff" /></I></Cell>
      <Cell className="w-[30px] pt-[3px]"><I w={17} h={16}><path d="M1 15C1 7 7 1 15 1M5 15C5 9 9 5 15 5M9 15C9 11 11 9 15 9" stroke="#c9c9c9" strokeWidth="1.300" /><circle cx="13.500" cy="13.500" r="2" fill="#fff" /></I></Cell>
      <Cell className="w-[26px] pt-[3px]"><I w={20} h={16}><path d="M1 5H4L8 1V15L4 11H1Z" stroke="#fff" strokeWidth="1.200" /><path d="M11 5C12 7 12 9 11 11M13.500 3C16 6 16 10 13.500 13M16 1C20 5 20 11 16 15" stroke="#d8d8d8" strokeWidth="1.200" /></I></Cell>
      <div className="flex w-[97px] flex-col items-center pt-[2px] text-[14px] leading-[23px] tracking-[-0.2px]">
        <span>06:46 p. m.</span>
        <span>07/09/2022</span>
      </div>
      <Cell className="ml-[4px] w-[48px] pt-[6px]">
        <I w={32} h={32}><path d="M1 2H21V16H10L5 20V16H1Z" fill="#fff" /><path d="M4 6H18M4 9H18M4 12H14" stroke="#1d1d1c" strokeWidth="1.300" /><circle cx="20" cy="21" r="9.500" fill="#2a2a2a" stroke="#8d8d8d" strokeWidth="1.200" /><text x="16" y="27" fill="#fff" className="text-[15px]">1</text></I>
      </Cell>
    </footer>
  )
}

export default function App() {
  return (
    <div className="h-[1076px] w-[1916px] overflow-hidden bg-[#222932] font-['Open_Sans','Noto_Sans_CJK_SC',sans-serif] text-[14px] whitespace-nowrap text-[#e1e4ea]">
      <Header />
      <div className="flex h-[122px] w-[1907px] bg-[#3b4453]">
        <DrawPanel />
        <ModifyPanel />
        <AnnotationPanel />
        <LayersPanel />
        <BlockPanel />
        <PropertiesPanel />
        <GroupsPanel />
        <OtherPanels />
      </div>
      <FileTabs />
      <div className="h-[5px] bg-[#3b4453]" />
      <Workspace />
      <div className="flex h-[35px] bg-[#222a36]">
        <LayoutTabs />
        <StatusBar />
      </div>
      <Taskbar />
    </div>
  )
}
